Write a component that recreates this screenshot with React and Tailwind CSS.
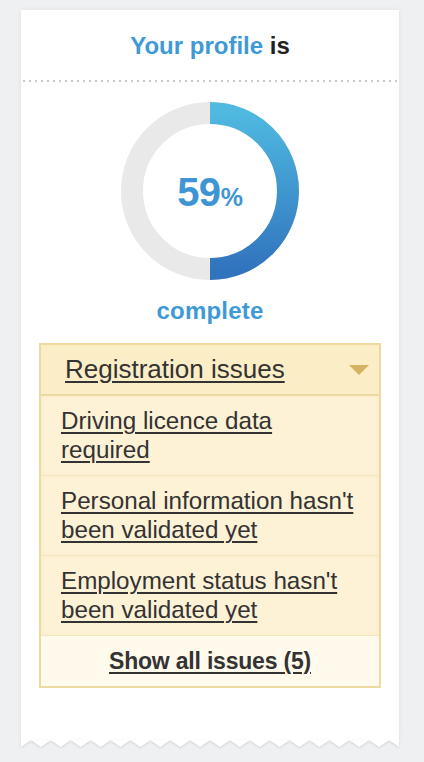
export default function App() {
  const teeth = 19;
  const w = 378;
  const tw = w / teeth;
  let d = "M0 0 L0 7";
  for (let k = 0; k < teeth; k++) {
    d += ` L${((k + 0.5) * tw).toFixed(2)} 0 L${((k + 1) * tw).toFixed(2)} 7`;
  }
  d += ` L${w} 0 Z`;

  const items = [
    "Driving licence data required",
    "Personal information hasn't been validated yet",
    "Employment status hasn't been validated yet",
  ];

  return (
    <div className="min-h-screen bg-[#eff0f2] pt-[10px] font-['Liberation_Sans',Arial,sans-serif]">
      <div className="ml-[21px] w-[378px]">
        <div className="bg-white h-[730px] flex flex-col items-center shadow-[0_0_5px_rgba(0,0,0,0.07)]">
          <h1 className="pt-[22px] pb-[20px] text-[24px] leading-[28px] font-bold text-center">
            <span className="text-[#3d9ad6]">Your profile</span>{" "}
            <span className="text-[#222222]">is</span>
          </h1>
          <div className="self-stretch mx-[2px] h-[2px] bg-[linear-gradient(to_right,#c9c9c9_2px,transparent_2px)] bg-[length:6px_2px] bg-repeat-x" />
          <div className="mt-[19px] grid place-items-center">
            <svg width="180" height="180" viewBox="0 0 180 180" className="[grid-area:1/1]">
              <defs>
                <linearGradient id="g" x1="0" y1="0" x2="0" y2="1">
                  <stop offset="0" stopColor="#4fb9e0" />
                  <stop offset="1" stopColor="#3174be" />
                </linearGradient>
              </defs>
              <circle cx="90" cy="90" r="78" fill="none" stroke="#e9e9e9" strokeWidth="22" />
              <path d="M90 12 A78 78 0 0 1 90 168" fill="none" stroke="url(#g)" strokeWidth="22" />
            </svg>
            <div className="[grid-area:1/1] flex items-baseline text-[#3e95d3] font-bold pt-[2px]">
              <span className="text-[40px] leading-none tracking-[-0.5px]">59</span>
              <span className="text-[25px] leading-none">%</span>
            </div>
          </div>
          <div className="mt-[16px] text-[24px] leading-[28px] font-bold text-[#3d9ad6] tracking-[0.2px]">
            complete
          </div>
          <div className="mt-[18px] self-stretch mx-[18px] border-2 border-[#eed9a0] bg-[#fdf1d6] text-[#333333]">
            <div className="h-[51px] flex items-center justify-between pl-[24px] pr-[10px] bg-[#fbedc5] border-b-2 border-[#eed9a0] text-[26px] leading-[29px]">
              <span className="underline decoration-[1.5px] underline-offset-[3px]">
                Registration issues
              </span>
              <svg width="20" height="10" viewBox="0 0 20 10">
                <path d="M0 0 L20 0 L10 10 Z" fill="#d6b363" />
              </svg>
            </div>
            {items.map((t, i) => (
              <div
                key={i}
                className="pl-[20px] pr-[18px] pt-[10px] pb-[11px] border-b border-[#f6e6bf] shadow-[inset_0_0_4px_rgba(200,160,60,0.08)] text-[24.2px] leading-[29px]"
              >
                <span className="underline decoration-[1.5px] underline-offset-[3px]">{t}</span>
              </div>
            ))}
            <div className="h-[50px] flex items-center justify-center bg-[#fffaeb] text-[23px] leading-[28px] font-bold tracking-[-0.2px]">
              <span className="underline decoration-[1.5px] underline-offset-[3px]">
                Show all issues (5)
              </span>
            </div>
          </div>
        </div>
        <svg
          width={w}
          height="8"
          viewBox={`0 0 ${w} 8`}
          className="block drop-shadow-[0_1px_1px_rgba(0,0,0,0.12)]"
        >
          <path d={d} fill="#ffffff" />
        </svg>
      </div>
    </div>
  );
}
